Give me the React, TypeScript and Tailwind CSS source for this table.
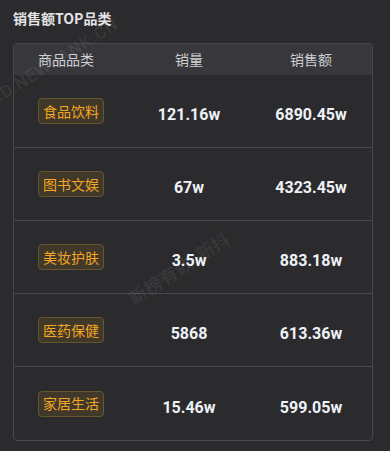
import React from "react";

const rows = [
  { name: "食品饮料", qty: "121.16w", amt: "6890.45w" },
  { name: "图书文娱", qty: "67w", amt: "4323.45w" },
  { name: "美妆护肤", qty: "3.5w", amt: "883.18w" },
  { name: "医药保健", qty: "5868", amt: "613.36w" },
  { name: "家居生活", qty: "15.46w", amt: "599.05w" },
];

const cjk = { fontFamily: '"Noto Sans CJK SC", "Noto Sans", sans-serif' };
const num = { fontFamily: 'Roboto, "Noto Sans", sans-serif' };

export default function App() {
  return (
    <div className="relative w-[390px] h-[451px] overflow-hidden bg-[#2b2b2d]" style={cjk}>
      <div className="pl-[13px] pt-[8px] h-[43px] text-[14px] font-bold text-[#e4e4e6] leading-[20px]">
        销售额TOP品类
      </div>
      <div className="ml-[13px] w-[360px] border border-[#48484c] rounded-[4px] overflow-hidden">
        <div className="grid grid-cols-[114px_122px_122px] h-[31px] items-center bg-[#38383c] text-[14px] text-[#cfd0d4]">
          <div className="pl-[24px]">商品品类</div>
          <div className="text-center">销量</div>
          <div className="text-center">销售额</div>
        </div>
        {rows.map((r, i) => (
          <div
            key={r.name}
            className={`grid grid-cols-[114px_122px_122px] h-[73px] items-center ${i < rows.length - 1 ? "border-b border-[#48484c]" : ""}`}
          >
            <div className="pl-[24px]">
              <span className="inline-flex items-center h-[26px] px-[4px] rounded-[4px] border border-[#655632] bg-[#403828] text-[14px] text-[#f5a623]">
                {r.name}
              </span>
            </div>
            <div className="text-center text-[16px] font-bold text-[#eef2f7] pt-[8px]" style={num}>{r.qty}</div>
            <div className="text-center text-[16px] font-bold text-[#eef2f7] pt-[8px]" style={num}>{r.amt}</div>
          </div>
        ))}
      </div>
      <div
        className="pointer-events-none absolute left-[-8px] top-[88px] text-[17px] tracking-[1px] text-white/[0.07] rotate-[-32deg] origin-left whitespace-nowrap"
        style={num}
      >
        XD.NEWRANK.CN
      </div>
      <div className="pointer-events-none absolute left-[130px] top-[286px] text-[18px] text-white/[0.07] rotate-[-33deg] origin-left whitespace-nowrap">
        新榜有数&nbsp;&nbsp;新抖
      </div>
    </div>
  );
}
